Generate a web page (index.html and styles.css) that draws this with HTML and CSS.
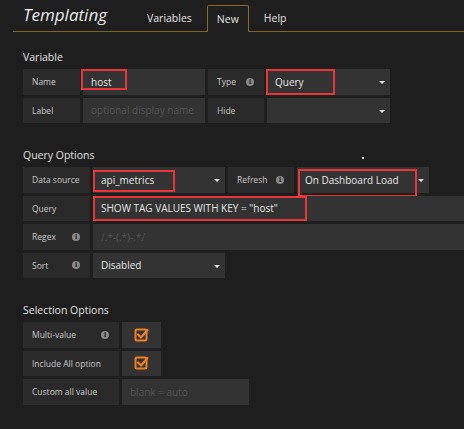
FILE: index.html
```html
<!DOCTYPE html>
<html>
<head>
<meta charset="utf-8">
<link rel="stylesheet" href="styles.css">
</head>
<body>
<div class="page">
  <div class="header">
    <div class="title">Templating</div>
    <div class="tab">Variables</div>
    <div class="tab active">New</div>
    <div class="tab">Help</div>
  </div>

  <div class="section first">
    <div class="heading">Variable</div>
    <div class="rows">
      <div class="row">
        <div class="label w57">Name</div>
        <div class="field w122"><span class="value">host</span><span class="mark mark-name"></span></div>
        <div class="label w56">Type <span class="info">i</span></div>
        <div class="field select w123"><span class="value">Query</span><span class="caret"></span><span class="mark mark-type"></span></div>
      </div>
      <div class="row">
        <div class="label w57">Label</div>
        <div class="field w122"><span class="placeholder">optional display name</span></div>
        <div class="label w56">Hide</div>
        <div class="field select w123"><span class="caret"></span></div>
      </div>
    </div>
  </div>

  <div class="section">
    <div class="heading">Query Options</div>
    <div class="rows">
      <div class="row">
        <div class="label w67">Data source</div>
        <div class="field select w132"><span class="value">api_metrics</span><span class="caret"></span><span class="mark mark-ds"></span></div>
        <div class="label w66">Refresh <span class="info">i</span></div>
        <div class="field select w132"><span class="value">On Dashboard Load</span><span class="caret"></span><span class="mark mark-refresh"></span><span class="speck"></span></div>
      </div>
      <div class="row">
        <div class="label w67">Query</div>
        <div class="field grow"><span class="value">SHOW TAG VALUES WITH KEY = "host"</span><span class="mark mark-query"></span></div>
      </div>
      <div class="row">
        <div class="label w67">Regex <span class="info">i</span></div>
        <div class="field grow"><span class="placeholder">/.*-(.*)-.*/</span></div>
      </div>
      <div class="row">
        <div class="label w67">Sort <span class="info">i</span></div>
        <div class="field select w132"><span class="value">Disabled</span><span class="caret"></span></div>
      </div>
    </div>
  </div>

  <div class="section">
    <div class="heading">Selection Options</div>
    <div class="rows">
      <div class="row">
        <div class="label w96">Multi-value <span class="info">i</span></div>
        <div class="field check w39">
          <svg width="16" height="16" viewBox="0 0 16 16"><rect x="1.5" y="2.5" width="11" height="11" rx="1.5" fill="none" stroke="#f08020" stroke-width="2"/><path d="M4 7.5 L7 10.5 L13.5 3" fill="none" stroke="#f08020" stroke-width="2.2" stroke-linecap="round" stroke-linejoin="round"/></svg>
        </div>
      </div>
      <div class="row">
        <div class="label w96">Include All option</div>
        <div class="field check w39">
          <svg width="16" height="16" viewBox="0 0 16 16"><rect x="1.5" y="2.5" width="11" height="11" rx="1.5" fill="none" stroke="#f08020" stroke-width="2"/><path d="M4 7.5 L7 10.5 L13.5 3" fill="none" stroke="#f08020" stroke-width="2.2" stroke-linecap="round" stroke-linejoin="round"/></svg>
        </div>
      </div>
      <div class="row">
        <div class="label w96">Custom all value</div>
        <div class="field w127"><span class="placeholder">blank = auto</span></div>
      </div>
    </div>
  </div>
</div>
</body>
</html>
```

FILE: styles.css
```css
html, body {
  margin: 0;
  padding: 0;
  background: #1f1e1e;
  overflow: hidden;
}
body {
  width: 464px;
  height: 429px;
  font-family: "Open Sans", "DejaVu Sans", sans-serif;
  color: #d8d8d8;
}
.page {
  padding-left: 13px;
}
.header {
  display: flex;
  align-items: flex-end;
  height: 31px;
  border-bottom: 1px solid #7d6326;
}
.title {
  width: 124px;
  box-sizing: border-box;
  padding-left: 10px;
  align-self: flex-start;
  padding-top: 3px;
  font-size: 17px;
  line-height: 24px;
  font-style: italic;
  color: #ececec;
}
.tab {
  padding: 0 10px;
  height: 26px;
  line-height: 26px;
  font-size: 10.5px;
  color: #e4e4e4;
  margin-right: 5px;
  box-sizing: border-box;
}
.tab.active {
  border: 1px solid #8a6a28;
  border-bottom: none;
  border-radius: 2px 2px 0 0;
  height: 27px;
  margin-bottom: -1px;
  background: #1f1e1e;
  padding: 0 9px;
  line-height: 26px;
}
.section {
  margin-left: 10px;
  margin-top: 25px;
}
.section.first {
  margin-top: 18px;
}
.heading {
  font-size: 10.5px;
  line-height: 14px;
  height: 14px;
  margin-bottom: 5px;
  color: #e0e0e0;
}
.rows {
  display: flex;
  flex-direction: column;
  gap: 3px;
}
.row {
  display: flex;
  gap: 3px;
  height: 25.5px;
}
.label {
  background: #2a2a2a;
  display: flex;
  align-items: center;
  justify-content: space-between;
  padding: 0 10px 0 9px;
  box-sizing: border-box;
  font-size: 8.5px;
  color: #c9c9c9;
  flex: none;
}
.info {
  width: 8px;
  height: 8px;
  border-radius: 50%;
  background: #8a8a8a;
  color: #2a2a2a;
  font-size: 7px;
  font-weight: bold;
  line-height: 8px;
  text-align: center;
  font-family: "DejaVu Serif", serif;
}
.field {
  background: #333333;
  position: relative;
  display: flex;
  align-items: center;
  padding-left: 8px;
  box-sizing: border-box;
  font-size: 10px;
  flex: none;
  white-space: nowrap;
}
.field.grow {
  flex: 1;
}
.value {
  color: #e6e6e6;
}
.placeholder {
  color: #555555;
}
.caret {
  position: absolute;
  right: 5px;
  top: 12px;
  width: 0;
  height: 0;
  border-left: 3px solid transparent;
  border-right: 3px solid transparent;
  border-top: 3px solid #e6e6e6;
}
.check {
  justify-content: center;
  padding-left: 0;
}
.check svg {
  display: block;
}
.w57 { width: 57px; }
.w56 { width: 56px; }
.w66 { width: 66px; }
.w67 { width: 67px; }
.w96 { width: 96px; }
.w122 { width: 122px; }
.w123 { width: 123px; }
.w127 { width: 127px; }
.w132 { width: 132px; }
.w39 { width: 39px; }

.mark {
  position: absolute;
  border: 2px solid #e8353a;
  box-sizing: border-box;
  pointer-events: none;
}
.mark-name { left: -2px; top: 0; width: 46px; height: 21px; }
.mark-type { left: -1px; top: 0; width: 69px; height: 25.5px; }
.mark-ds { left: 0; top: 3px; width: 82px; height: 22px; }
.mark-refresh { left: 1px; top: 2px; width: 119px; height: 28px; }
.mark-query { left: 0; top: 0; width: 214px; height: 25.5px; }
.speck {
  position: absolute;
  left: 65px;
  top: -10px;
  width: 2px;
  height: 2px;
  background: #dddddd;
}
```
